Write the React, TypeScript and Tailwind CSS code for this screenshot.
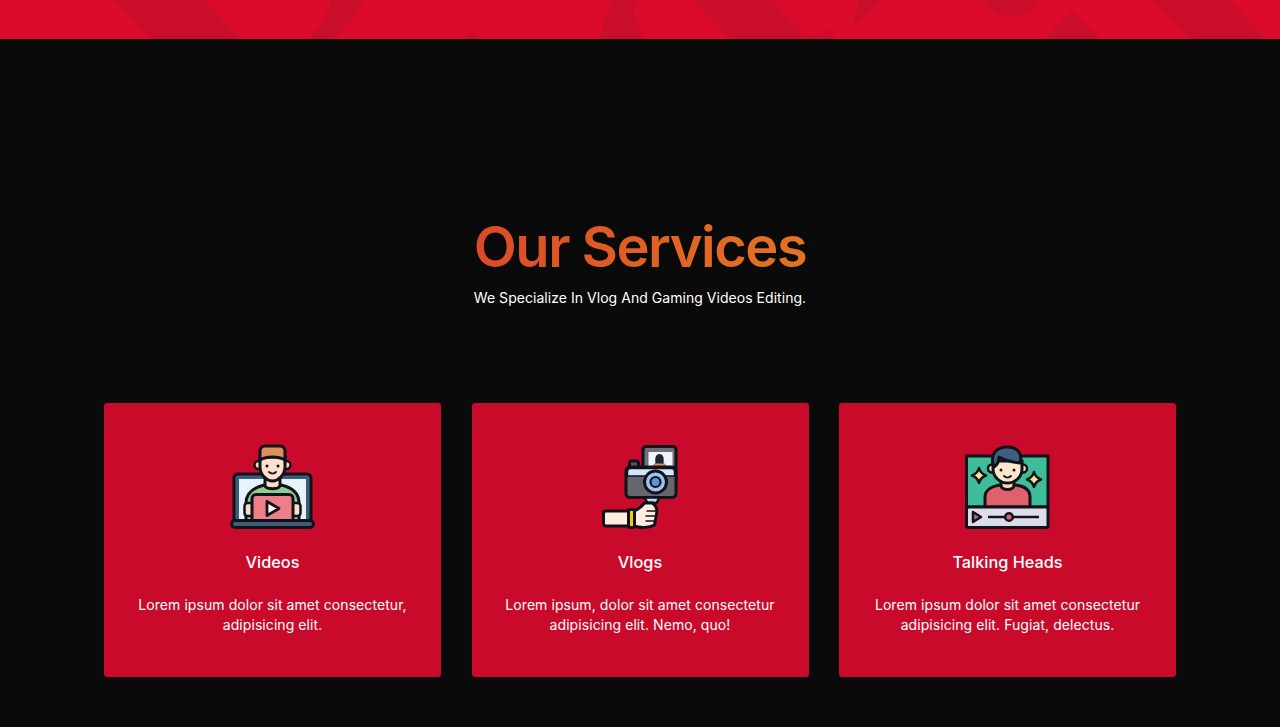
import React from 'react'

function TopBanner() {
  return (
    <header className="relative h-[39px] w-full overflow-hidden bg-[#dc0a2b]">
      <svg className="absolute inset-0 h-full w-full" viewBox="0 0 1280 39" fill="#c90d2b">
        <path d="M114 0H204L241 39H151Z" />
        <path d="M331 0H365C358 14 348 27 333 39H308C320 27 328 14 331 0Z" />
        <path d="M473 30L482 39H463Z" />
        <path d="M613 0H640C634 4 634 14 637 22C639 29 641 35 643 39H600C602 25 606 12 613 0Z" />
        <path d="M640 33L646 39H640Z" />
        <path d="M693 0H771L803 33C808 37 822 38 830 28L834 32L832 39H730Z" />
        <path d="M860 0H881C874 9 866 17 856 24C853 23 853 21 854 18Z" />
        <path d="M985 0H1040C1034 11 1024 17 1012 17C1000 17 991 11 985 0Z" />
        <path d="M1073 10L1101 39H1044Z" />
        <path d="M1152 0H1230L1266 39H1189Z" />
      </svg>
    </header>
  )
}

function LaptopIcon() {
  return (
    <svg viewBox="0 0 105 100" className="h-[100px] w-[105px]">
      <rect x="14" y="39" width="77" height="49" rx="4" fill="#3e5c76" stroke="#10131a" strokeWidth="3" />
      <rect x="19" y="44" width="67" height="42" fill="#e6f3fb" />
      <path d="M26 86V68C26 56 36 52 44 50H61C70 52 79 56 79 68V86Z" fill="#8fce8f" stroke="#10131a" strokeWidth="3" />
      <path d="M45 44H60V50C60 55 45 55 45 50Z" fill="#fbdcc6" stroke="#10131a" strokeWidth="3" />
      <circle cx="38.500" cy="30" r="4" fill="#fbdcc6" stroke="#10131a" strokeWidth="2.500" />
      <circle cx="66.500" cy="30" r="4" fill="#fbdcc6" stroke="#10131a" strokeWidth="2.500" />
      <path d="M40 22H65V32C65 40 58 46 52.500 46C47 46 40 40 40 32Z" fill="#fde1cf" stroke="#10131a" strokeWidth="3" />
      <path d="M40 25V16C40 13 42 11 45 11H60C63 11 65 13 65 16V25C58 21 47 21 40 25Z" fill="#dd8f5c" stroke="#10131a" strokeWidth="3" />
      <circle cx="47" cy="31" r="1.500" fill="#10131a" />
      <circle cx="58" cy="31" r="1.500" fill="#10131a" />
      <path d="M49 37C51 39 54 39 56 37" fill="none" stroke="#10131a" strokeWidth="1.800" strokeLinecap="round" />
      <rect x="24.500" y="68" width="10" height="13" rx="3" fill="#fbdcc6" stroke="#10131a" strokeWidth="2.500" />
      <rect x="70.500" y="68" width="10" height="13" rx="3" fill="#fbdcc6" stroke="#10131a" strokeWidth="2.500" />
      <rect x="32" y="59.500" width="41" height="28.500" rx="4" fill="#ee7f8a" stroke="#10131a" strokeWidth="3" />
      <path d="M47 66.500L59 73.500L47 80.500Z" fill="#fff" stroke="#10131a" strokeWidth="2.800" strokeLinejoin="round" />
      <rect x="11.500" y="85.500" width="82" height="7" rx="3.500" fill="#3e5c76" stroke="#10131a" strokeWidth="3" />
    </svg>
  )
}

function CameraIcon() {
  return (
    <svg viewBox="-1.500 0 105 100" className="h-[100px] w-[105px]">
      <rect x="53.500" y="11.500" width="33" height="36" rx="3" fill="#6f6f75" stroke="#10131a" strokeWidth="3" />
      <rect x="59" y="17" width="24" height="16" fill="#f1f4f8" />
      <path d="M63 33C63 30 65 29 66 28C65 22 67 19 70 19C73 19 75 22 74 28C75 29 77 30 77 33Z" fill="#1d2430" />
      <path d="M63 33C63 30 65 29 66 28.500H74C75 29 77 30 77 33Z" fill="#d98f5e" />
      <rect x="40" y="26" width="9" height="8" rx="2" fill="#55555c" stroke="#10131a" strokeWidth="3" />
      <rect x="36.500" y="32" width="50" height="30.500" rx="4" fill="#66666d" stroke="#10131a" strokeWidth="3" />
      <path d="M38 41V37C38 34.500 39 33.500 41 33.500H82C84 33.500 85 34.500 85 37V41Z" fill="#d3e8f7" stroke="#10131a" strokeWidth="1.500" />
      <circle cx="66" cy="47" r="11" fill="#9cc5ec" stroke="#10131a" strokeWidth="3" />
      <circle cx="66" cy="47" r="5" fill="#5e92d4" stroke="#10131a" strokeWidth="2.200" />
      <path d="M55 62.500H70L67 68H58Z" fill="#bcdcf3" stroke="#10131a" strokeWidth="2.500" />
      <rect x="57.500" y="68" width="6" height="6" fill="#55555c" stroke="#10131a" strokeWidth="2.500" />
      <rect x="14" y="76" width="27" height="15" rx="2.500" fill="#fdeee0" stroke="#10131a" strokeWidth="3" />
      <rect x="39" y="74.500" width="6" height="18" rx="1.500" fill="#f5c518" stroke="#10131a" strokeWidth="3" />
      <path d="M45 76C49 74 52 72 55 68H63C67 71 68 75 67 79L65 90C60 93 50 93 45 91Z" fill="#fdeee0" stroke="#10131a" strokeWidth="3" strokeLinejoin="round" />
      <path d="M57 76H67M56 81H66M56 86H65" stroke="#10131a" strokeWidth="1.600" fill="none" />
    </svg>
  )
}

function PersonIcon() {
  return (
    <svg viewBox="0 0 105 100" className="h-[100px] w-[105px]">
      <rect x="11.500" y="21" width="81.500" height="51" fill="#3fbd98" stroke="#10131a" strokeWidth="3" />
      <path d="M30 72V62C30 55 37 51 46 50H60C69 51 75 55 75 62V72Z" fill="#e0606e" stroke="#10131a" strokeWidth="3" />
      <path d="M46 44H59V50C59 56 46 56 46 50Z" fill="#fdd9bb" stroke="#10131a" strokeWidth="3" />
      <circle cx="37" cy="33.500" r="4" fill="#fdd9bb" stroke="#10131a" strokeWidth="2.500" />
      <circle cx="68" cy="33.500" r="4" fill="#fdd9bb" stroke="#10131a" strokeWidth="2.500" />
      <path d="M38 26H67V34C67 42 60 48 52.500 48C45 48 38 42 38 34Z" fill="#fde5cc" stroke="#10131a" strokeWidth="3" />
      <path d="M39 32C34 19 42 12 52 12C62 12 68 18 65 28C57 27 49 25 44 22C44 26 42 30 39 32Z" fill="#3e5f82" stroke="#10131a" strokeWidth="3" strokeLinejoin="round" />
      <circle cx="46" cy="35" r="1.500" fill="#10131a" />
      <circle cx="59" cy="35" r="1.500" fill="#10131a" />
      <path d="M49 41C51 43 54 43 56 41" fill="none" stroke="#10131a" strokeWidth="1.800" strokeLinecap="round" />
      <path d="M24 33C25 37 27 39 31 40.500C27 42 25 44 24 48C23 44 21 42 17 40.500C21 39 23 37 24 33Z" fill="#fce38a" stroke="#10131a" strokeWidth="2.500" strokeLinejoin="round" />
      <path d="M79 37C80 41 82 43 86 44.500C82 46 80 48 79 52C78 48 76 46 72 44.500C76 43 78 41 79 37Z" fill="#fce38a" stroke="#10131a" strokeWidth="2.500" strokeLinejoin="round" />
      <rect x="11.500" y="72" width="81.500" height="20.500" rx="2" fill="#dcdcec" stroke="#10131a" strokeWidth="3" />
      <path d="M18 77L26 82L18 87Z" fill="#e0606e" stroke="#10131a" strokeWidth="2.500" strokeLinejoin="round" />
      <path d="M33 82H84" stroke="#10131a" strokeWidth="2.500" />
      <circle cx="54" cy="82" r="3.800" fill="#e0606e" stroke="#10131a" strokeWidth="2.500" />
    </svg>
  )
}

const services = [
  { title: 'Videos', text: 'Lorem ipsum dolor sit amet consectetur, adipisicing elit.', icon: <LaptopIcon /> },
  { title: 'Vlogs', text: 'Lorem ipsum, dolor sit amet consectetur adipisicing elit. Nemo, quo!', icon: <CameraIcon /> },
  { title: 'Talking Heads', text: 'Lorem ipsum dolor sit amet consectetur adipisicing elit. Fugiat, delectus.', icon: <PersonIcon /> },
]

export default function App() {
  return (
    <div className="min-h-[727px] bg-[#0a0a0a] font-['Inter','Liberation_Sans',sans-serif] text-white">
      <TopBanner />
      <section className="pt-[178px]">
        <div className="text-center">
          <h1 className="mx-auto w-fit bg-gradient-to-r from-[#dc4a26] to-[#e47322] bg-clip-text text-[56px] leading-[60px] font-semibold tracking-[-1.5px] text-transparent">
            Our Services
          </h1>
          <p className="mt-[11px] mb-[95px] text-[14px] leading-[20px] tracking-[0.04px]">We Specialize In Vlog And Gaming Videos Editing.</p>
        </div>
        <div className="mx-auto grid w-[1072px] grid-cols-3 gap-[30.5px]">
          {services.map((s) => (
            <div key={s.title} className="flex h-[274px] flex-col items-center rounded-[3px] bg-[#c90a2a] px-[30px] pt-[32px] text-center">
              {s.icon}
              <h3 className="mt-[15px] text-[16.3px] leading-[24px] font-medium">{s.title}</h3>
              <p className="mt-[21px] text-[14px] leading-[20px] tracking-[0.07px]">{s.text}</p>
            </div>
          ))}
        </div>
      </section>
    </div>
  )
}
